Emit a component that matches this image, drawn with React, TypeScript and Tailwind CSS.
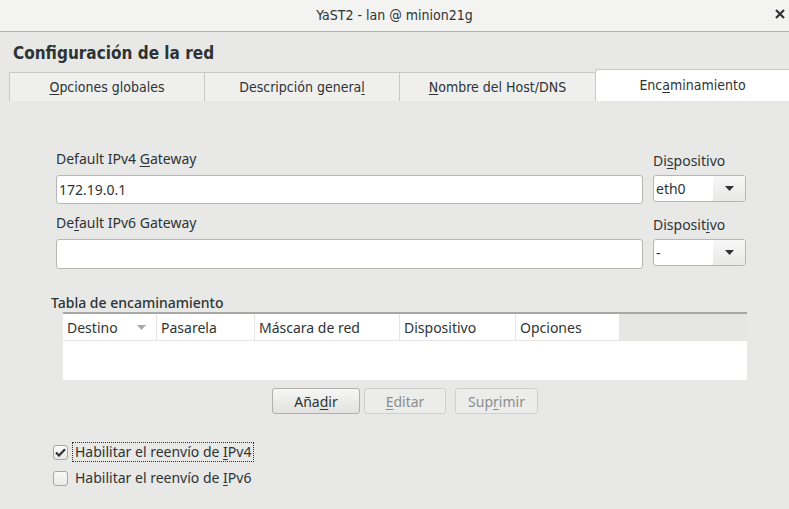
import React from "react";

const cond = { fontFamily: '"DejaVu Sans Condensed", "DejaVu Sans", sans-serif', fontStretch: "condensed" } as const;

function M({ children }: { children: React.ReactNode }) {
  return <span className="underline underline-offset-2">{children}</span>;
}

function Select({ value }: { value: string }) {
  return (
    <div className="flex h-[27px] w-[93px] overflow-hidden rounded-[3px] border border-[#b6b6b3] bg-white">
      <div className="flex flex-1 items-center pl-[2px] text-[#2e3436]">{value}</div>
      <div className="flex w-[32px] items-center justify-center bg-gradient-to-b from-[#f7f7f7] to-[#e8e8e6]">
        <svg width="9" height="5" viewBox="0 0 9 5">
          <path d="M0 0h9L4.5 5z" fill="#2e3436" />
        </svg>
      </div>
    </div>
  );
}

export default function App() {
  const tabs = [
    { pre: "", m: "O", post: "pciones globales", w: "w-[196px]" },
    { pre: "Descripción genera", m: "l", post: "", w: "w-[196px]" },
    { pre: "", m: "N", post: "ombre del Host/DNS", w: "w-[197px]" },
  ];
  const cols = [
    { t: "Destino", w: "w-[94px]", sort: true },
    { t: "Pasarela", w: "w-[98px]" },
    { t: "Máscara de red", w: "w-[145px]" },
    { t: "Dispositivo", w: "w-[116px]" },
    { t: "Opciones", w: "w-[104px]" },
  ];

  return (
    <div
      className="flex h-[509px] w-[789px] flex-col bg-[#e8e8e7] text-[14px] text-[#2e3436]"
      style={{ fontFamily: '"Noto Sans", "Open Sans", sans-serif' }}
    >
      {/* title bar */}
      <div className="relative flex h-[32px] shrink-0 items-center justify-center border-b border-[#b3b3b0] bg-[#f3f3f2]">
        <span className="text-[14px] text-[#2e3436]" style={cond}>YaST2 - lan @ minion21g</span>
        <svg className="absolute right-[4px] top-[9px]" width="10" height="10" viewBox="0 0 10 10">
          <path d="M1 1l8 8M9 1L1 9" stroke="#2e3436" strokeWidth="2.2" />
        </svg>
      </div>

      <div className="px-[13px] pt-[9px] text-[17px] font-bold leading-[24px] text-[#2e3436]" style={cond}>
        Configuración de la red
      </div>

      {/* tabs */}
      <div className="mt-[4px] flex items-end pl-[9px]" style={cond}>
        {tabs.map((t, i) => (
          <div
            key={i}
            className={`${t.w} flex h-[29px] items-center justify-center border border-b-0 border-[#c8c8c5] bg-[#efefee] text-[14px] ${i > 0 ? "-ml-px" : ""}`}
          >
            {t.pre}
            <M>{t.m}</M>
            {t.post}
          </div>
        ))}
        <div className="-ml-px flex h-[32px] flex-1 items-center justify-center rounded-tl-[3px] border border-b-0 border-r-0 border-[#c8c8c5] bg-white text-[14px]">
          Enc<M>a</M>minamiento
        </div>
      </div>

      {/* content */}
      <div className="flex flex-1 flex-col">
        <div className="flex gap-[10px] pl-[56px] pt-[45px]">
          <div className="flex w-[587px] flex-col">
            <div className="h-[29px] leading-[26px]">
              Default IPv4 <M>G</M>ateway
            </div>
            <div className="flex h-[29px] items-center rounded-[3px] border border-[#b6b6b3] bg-white px-[2px]">172.19.0.1</div>
          </div>
          <div className="flex flex-col pt-[2px]">
            <div className="h-[27px] leading-[26px]">
              Di<M>s</M>positivo
            </div>
            <Select value="eth0" />
          </div>
        </div>

        <div className="flex gap-[10px] pl-[56px] pt-[6px]">
          <div className="flex w-[587px] flex-col">
            <div className="h-[29px] leading-[26px]">
              De<M>f</M>ault IPv6 Gateway
            </div>
            <div className="h-[30px] rounded-[3px] border border-[#b6b6b3] bg-white" />
          </div>
          <div className="flex flex-col pt-[2px]">
            <div className="h-[27px] leading-[26px]">
              Disposit<M>i</M>vo
            </div>
            <Select value="-" />
          </div>
        </div>

        <div className="pl-[51px] pt-[25px] font-medium leading-[18px]">Tabla de encaminamiento</div>

        <div className="ml-[63px] w-[684px] border-t-2 border-[#a8a8a5] bg-white">
          <div className="flex h-[27px] border-b border-[#e6e6e5]">
            {cols.map((c) => (
              <div key={c.t} className={`${c.w} flex items-center justify-between border-r border-[#e6e6e5] pl-[4px] pr-[10px]`}>
                <span>{c.t}</span>
                {c.sort && (
                  <svg width="9" height="5" viewBox="0 0 9 5">
                    <path d="M0 0h9L4.5 5z" fill="#a9a9a9" />
                  </svg>
                )}
              </div>
            ))}
            <div className="flex-1 bg-[#e6e6e5]" />
          </div>
          <div className="h-[39px]" />
        </div>

        <div className="flex pl-[272px] pt-[8px]">
          <div className="flex h-[26px] w-[88px] items-center justify-center rounded-[3px] border border-[#b0b0ad] bg-gradient-to-b from-[#f6f6f6] to-[#e2e2e0]">
            Aña<M>d</M>ir
          </div>
          <div className="ml-[4px] flex h-[26px] w-[82px] items-center justify-center rounded-[3px] border border-[#cfcfcd] bg-[#ececeb] text-[#8b8e8f]">
            <M>E</M>ditar
          </div>
          <div className="ml-[9px] flex h-[26px] w-[83px] items-center justify-center rounded-[3px] border border-[#cfcfcd] bg-[#ececeb] text-[#8b8e8f]">
            Sup<M>r</M>imir
          </div>
        </div>

        <div className="flex flex-col gap-[6px] pl-[53px] pt-[28px]">
          <div className="flex items-center gap-[4px]">
            <div className="flex h-[15px] w-[15px] items-center justify-center rounded-[3px] border border-[#a6a6a3] bg-gradient-to-b from-[#fafafa] to-[#e8e8e7]">
              <svg width="11" height="9" viewBox="0 0 11 9">
                <path d="M1 4.5l3 3L10 1.2" stroke="#2e3436" strokeWidth="2.2" fill="none" />
              </svg>
            </div>
            <div className="border border-dotted border-[#2e3436] px-[2px] leading-[18px]">
              Habilitar el reenvío de <M>I</M>Pv4
            </div>
          </div>
          <div className="flex items-center gap-[4px]">
            <div className="h-[15px] w-[15px] rounded-[3px] border border-[#a6a6a3] bg-gradient-to-b from-[#fafafa] to-[#e8e8e7]" />
            <div className="border border-transparent px-[2px] leading-[18px]">
              Habilitar el reenvío de <M>I</M>Pv6
            </div>
          </div>
        </div>
      </div>
    </div>
  );
}
